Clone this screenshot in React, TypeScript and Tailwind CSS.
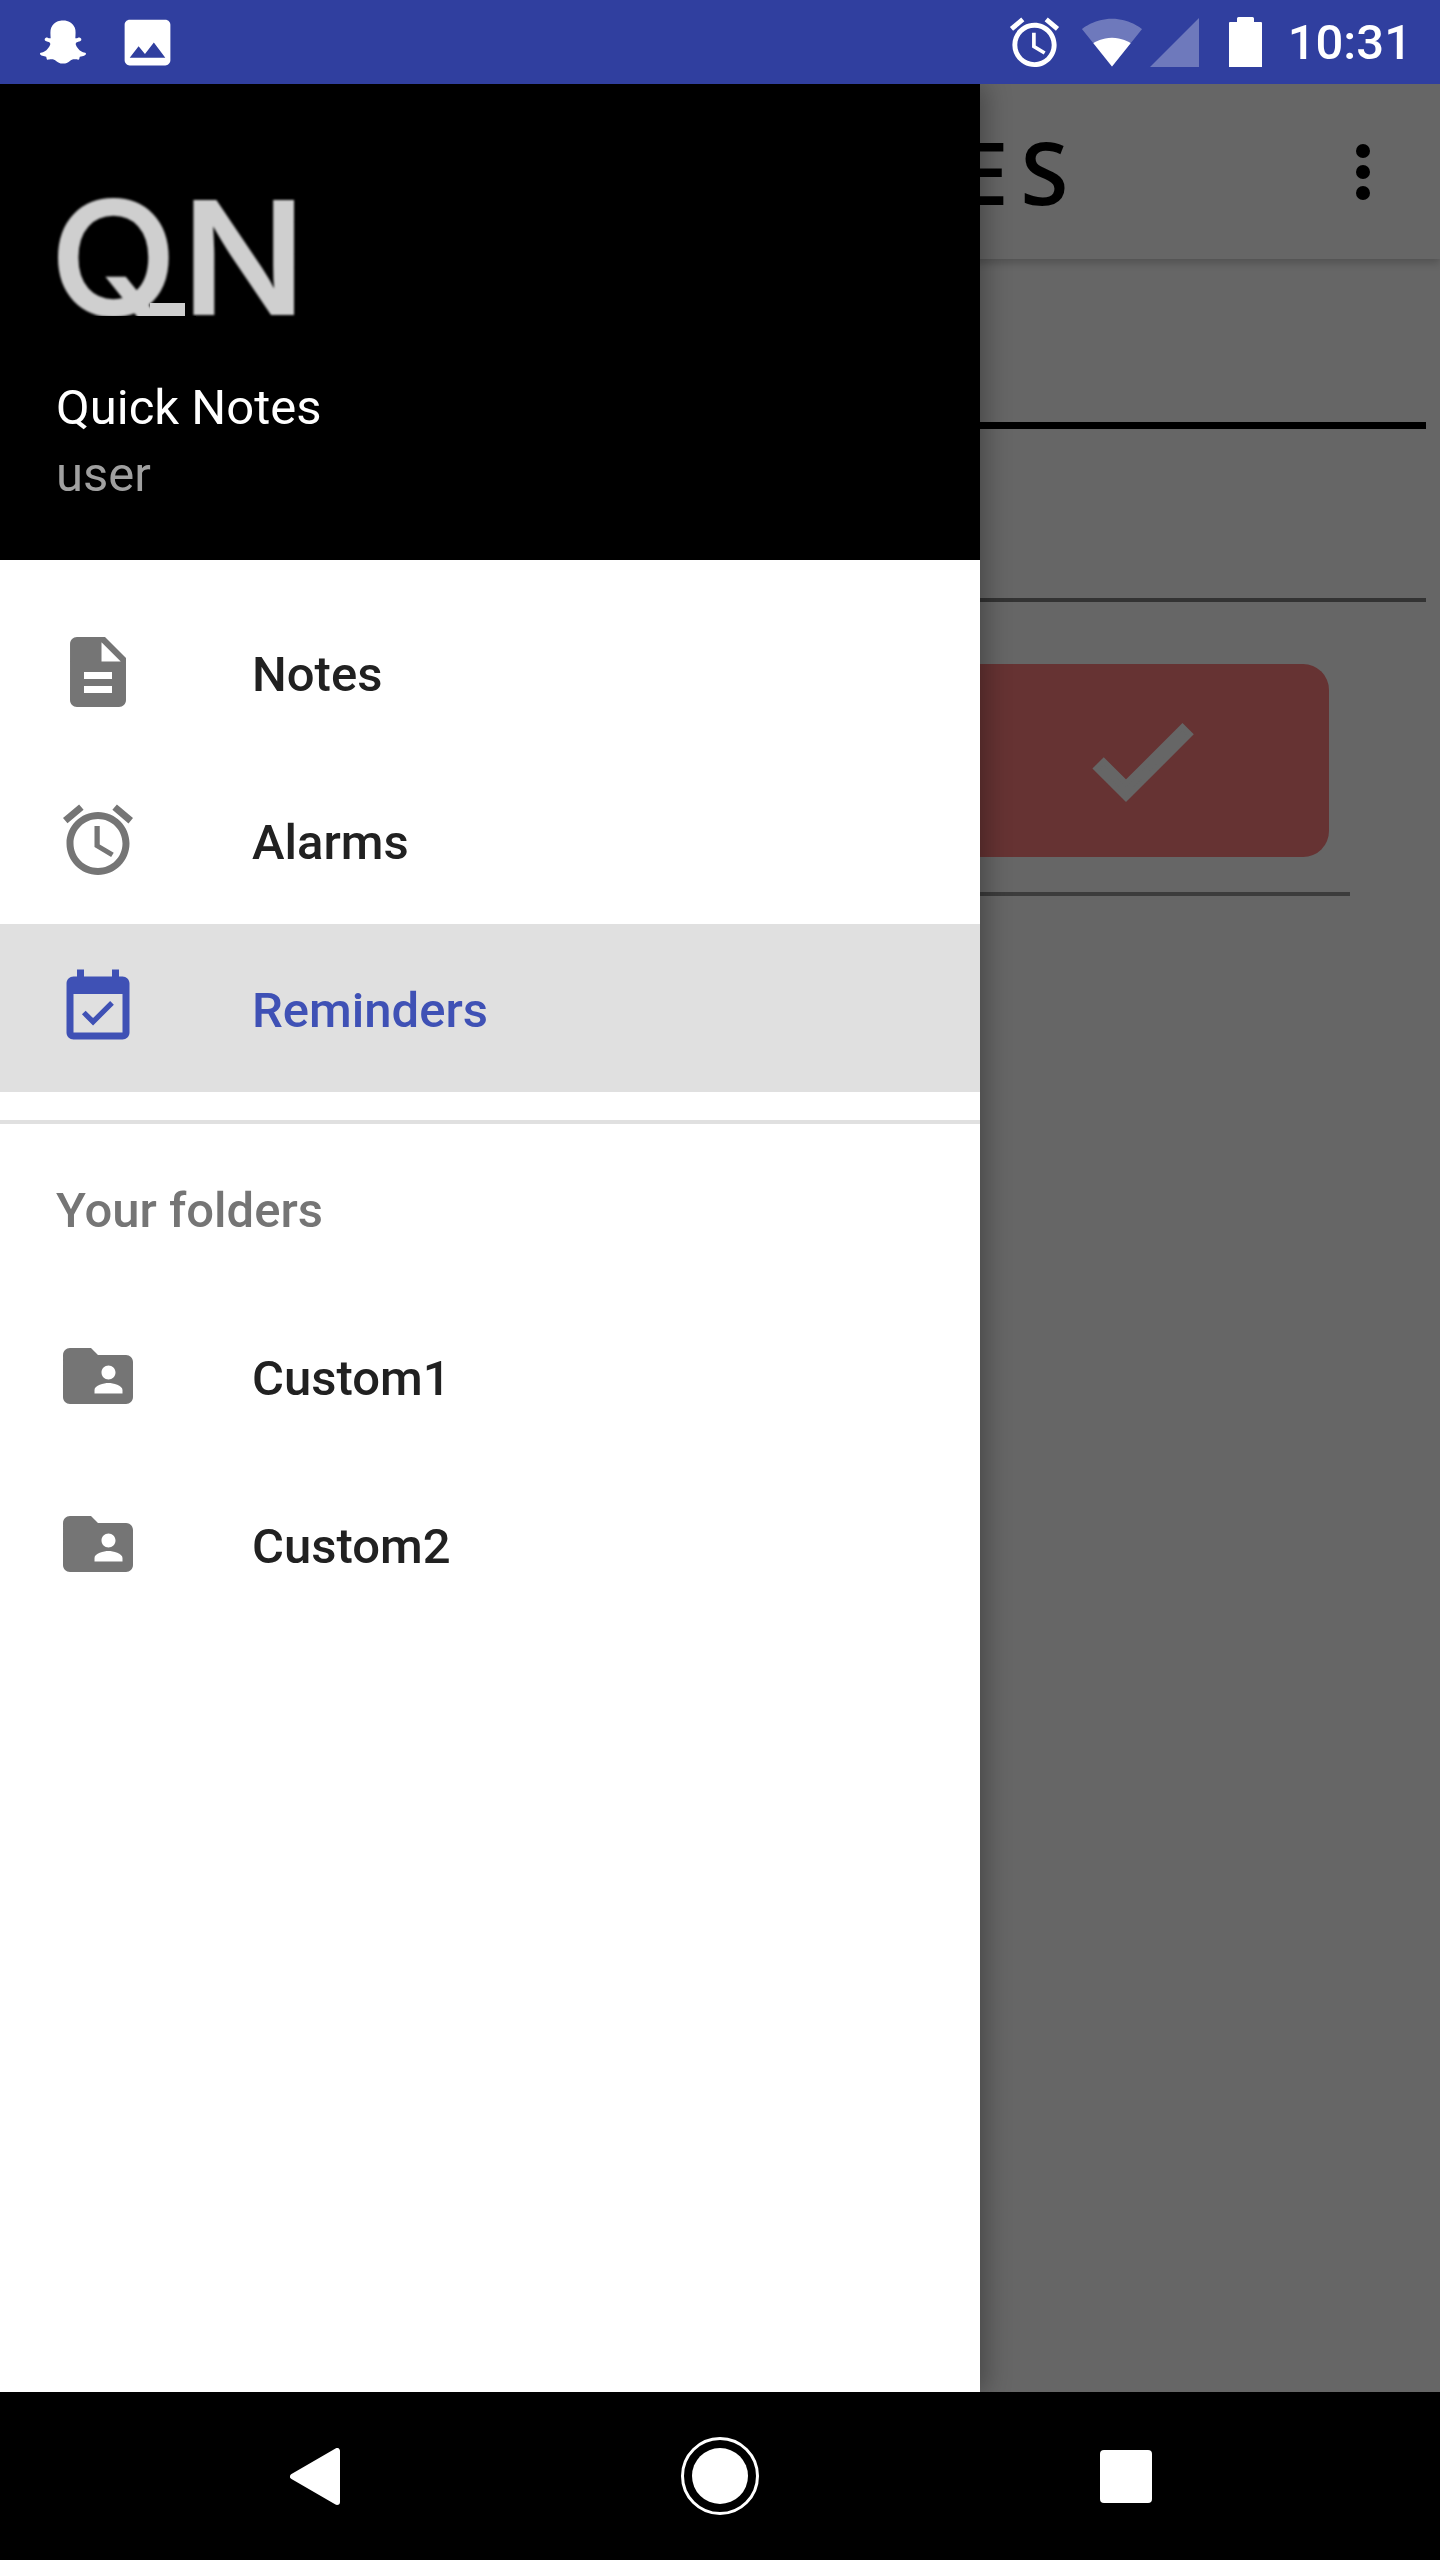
import { FaSnapchatGhost } from "react-icons/fa";

const paths = {
  notes:
    "M14 2H6c-1.1 0-1.99.9-1.99 2L4 20c0 1.1.89 2 1.99 2H18c1.1 0 2-.9 2-2V8l-6-6zm2 16H8v-2h8v2zm0-4H8v-2h8v2zm-3-5V3.5L18.5 9H13z",
  alarm:
    "M22 5.72l-4.6-3.86-1.29 1.53 4.6 3.86L22 5.72zM7.88 3.39L6.6 1.86 2 5.71l1.29 1.53 4.59-3.85zM12.5 8H11v6l4.75 2.85.75-1.23-4-2.37V8zM12 4c-4.97 0-9 4.03-9 9s4.03 9 9 9 9-4.03 9-9-4.03-9-9-9zm0 16c-3.87 0-7-3.13-7-7s3.13-7 7-7 7 3.13 7 7-3.13 7-7 7z",
  reminders:
    "M16.53 11.06L15.47 10l-4.88 4.88-2.12-2.12-1.06 1.06L10.59 17l5.94-5.94zM19 3h-1V1h-2v2H8V1H6v2H5c-1.11 0-1.99.9-1.99 2L3 19c0 1.1.89 2 2 2h14c1.1 0 2-.9 2-2V5c0-1.1-.9-2-2-2zm0 16H5V8h14v11z",
  folder:
    "M20 6h-8l-2-2H4c-1.1 0-1.99.9-1.99 2L2 18c0 1.1.9 2 2 2h16c1.1 0 2-.9 2-2V8c0-1.1-.9-2-2-2zm-5 3c1.1 0 2 .9 2 2s-.9 2-2 2-2-.9-2-2 .9-2 2-2zm4 8h-8v-1c0-1.33 2.67-2 4-2s4 .67 4 2v1z",
  photo:
    "M21 19V5c0-1.1-.9-2-2-2H5c-1.1 0-2 .9-2 2v14c0 1.1.9 2 2 2h14c1.1 0 2-.9 2-2zM8.5 13.5l2.5 3.01L14.5 12l4.5 6H5l3.5-4.5z",
};

function Icon({ d, className }: { d: string; className: string }) {
  return (
    <svg viewBox="0 0 24 24" fill="currentColor" className={className}>
      <path d={d} />
    </svg>
  );
}

function StatusBar() {
  return (
    <div className="flex h-[84px] shrink-0 items-center bg-[#303f9f] text-white">
      <FaSnapchatGhost className="ml-[39px] h-[46px] w-[48px]" />
      <Icon d={paths.photo} className="ml-[30px] h-[61px] w-[61px]" />

      {/* right side */}
      <div className="ml-auto flex items-center">
        <Icon d={paths.alarm} className="h-[59px] w-[59px]" />
        <svg viewBox="0 0 24 24" className="ml-[17px] h-[62px] w-[62px]" fill="white">
          <path
            fillOpacity="0.3"
            d="M12.01 21.49L23.64 7c-.45-.34-4.93-4-11.64-4C5.28 3 .81 6.66.36 7l11.63 14.49.02.01z"
          />
          <path d="M12 21.5L19.2 12.5C18.6 12 15.7 10.4 12 10.4C8.3 10.4 5.4 12 4.8 12.5Z" />
        </svg>
        <svg viewBox="0 0 49 49" className="ml-[7px] h-[49px] w-[49px]" fill="white" fillOpacity="0.3">
          <path d="M0 49H49V0z" />
        </svg>
        <svg viewBox="0 0 33 50" className="ml-[30px] h-[50px] w-[33px]" fill="white">
          <path d="M8 5V1.5Q8 0 9.5 0H23.5Q25 0 25 1.5V5H32Q33 5 33 6V50H0V6Q0 5 1 5z" />
        </svg>
        <span className="ml-[26px] mr-[28px] font-['Roboto',sans-serif] text-[49px] leading-none font-medium">
          10:31
        </span>
      </div>
    </div>
  );
}

// what is left of the app behind the scrim
function Background() {
  return (
    <div className="h-full bg-[#666666]">
      <div className="relative flex h-[175px] items-center justify-end bg-[#666666] shadow-[0_4px_8px_rgba(0,0,0,0.2)]">
        <span className="absolute left-[960px] top-[39px] font-['Open_Sans',sans-serif] text-[87px] leading-[96px] font-semibold tracking-[12px] text-black">
          ES
        </span>
        <svg viewBox="0 0 14 56" className="mr-[70px] h-[56px] w-[14px]" fill="black">
          <circle cx="7" cy="7" r="7" />
          <circle cx="7" cy="28" r="7" />
          <circle cx="7" cy="49" r="7" />
        </svg>
      </div>

      <div className="mr-[14px] mt-[163px] h-[7px] bg-black" />
      <div className="mr-[14px] mt-[169px] h-[4px] bg-[#333333]" />
      <div className="mr-[111px] mt-[62px] flex h-[193px] items-center justify-end">
        <div className="flex h-full w-[374px] items-center justify-center rounded-[26px] bg-[#663333]">
          <svg viewBox="0 0 24 24" className="h-[128px] w-[128px] text-[#666666]" fill="currentColor" stroke="currentColor" strokeWidth="1">
            <path d="M9 16.17L4.83 12l-1.42 1.41L9 19 21 7l-1.41-1.41z" />
          </svg>
        </div>
      </div>
      <div className="mr-[90px] mt-[35px] h-[4px] bg-[#3c3c3c]" />
    </div>
  );
}

function NavRow({ icon, label, active }: { icon: string; label: string; active?: boolean }) {
  return (
    <div className={`flex h-[168px] items-center ${active ? "bg-[#e0e0e0] text-[#3f51b5]" : "text-[#212121]"}`}>
      <Icon d={icon} className={`ml-[56px] h-[84px] w-[84px] ${active ? "" : "text-[#757575]"}`} />
      <span className="ml-[112px] pt-[4px] text-[49px] leading-none font-medium">{label}</span>
    </div>
  );
}

function Drawer() {
  return (
    <div className="absolute inset-y-0 left-0 flex w-[980px] flex-col bg-white font-['Roboto',sans-serif] shadow-[6px_0_24px_rgba(0,0,0,0.3)]">
      {/* header */}
      <div className="flex h-[476px] shrink-0 flex-col bg-black pl-[56px] pt-[116px]">
        <div className="relative h-[116px] w-[242px]">
          <span className="absolute left-[-6px] top-[-32px] origin-left scale-x-[1.06] font-['Inter',sans-serif] text-[156px] leading-[180px] font-medium tracking-[4px] text-[#cfcfcf] blur-[1px] [-webkit-text-stroke:2px_#cfcfcf]">
            QN
          </span>
          {/* the logo image cuts the Q off flat at the bottom */}
          <div className="absolute left-0 top-[116px] h-[16px] w-[140px] bg-black" />
          <div className="absolute left-[94px] top-[103px] h-[13px] w-[35px] bg-[#cfcfcf] blur-[0.5px]" />
        </div>
        <div className="mt-[58px] text-[49px] leading-[67px] font-normal text-white">Quick Notes</div>
        <div className="text-[49px] leading-[67px] text-[#a0a0a0]">user</div>
      </div>

      <div className="pt-[28px]">
        <NavRow icon={paths.notes} label="Notes" />
        <NavRow icon={paths.alarm} label="Alarms" />
        <NavRow icon={paths.reminders} label="Reminders" active />
      </div>

      <div className="mt-[28px] h-[4px] bg-[#e0e0e0]" />
      <div className="flex h-[168px] items-center pl-[56px] pt-[4px] text-[49px] leading-none font-medium text-[#757575]">
        Your folders
      </div>
      <NavRow icon={paths.folder} label="Custom1" />
      <NavRow icon={paths.folder} label="Custom2" />
    </div>
  );
}

function NavBar() {
  return (
    <div className="flex h-[168px] shrink-0 items-center justify-between bg-black pl-[290px] pr-[288px]">
      <svg viewBox="0 0 50 57" className="h-[57px] w-[50px]" fill="white" stroke="white" strokeWidth="6" strokeLinejoin="round">
        <path d="M3 28.5L47 3V54z" />
      </svg>
      <div className="flex h-[78px] w-[78px] items-center justify-center rounded-full border-[3px] border-white">
        <div className="h-[56px] w-[56px] rounded-full bg-white" />
      </div>
      <div className="h-[53px] w-[52px] rounded-[4px] bg-white" />
    </div>
  );
}

export default function App() {
  return (
    <div className="flex h-[2560px] w-[1440px] flex-col overflow-hidden">
      <StatusBar />
      <div className="relative flex-1 overflow-hidden">
        <Background />
        <Drawer />
      </div>
      <NavBar />
    </div>
  );
}
